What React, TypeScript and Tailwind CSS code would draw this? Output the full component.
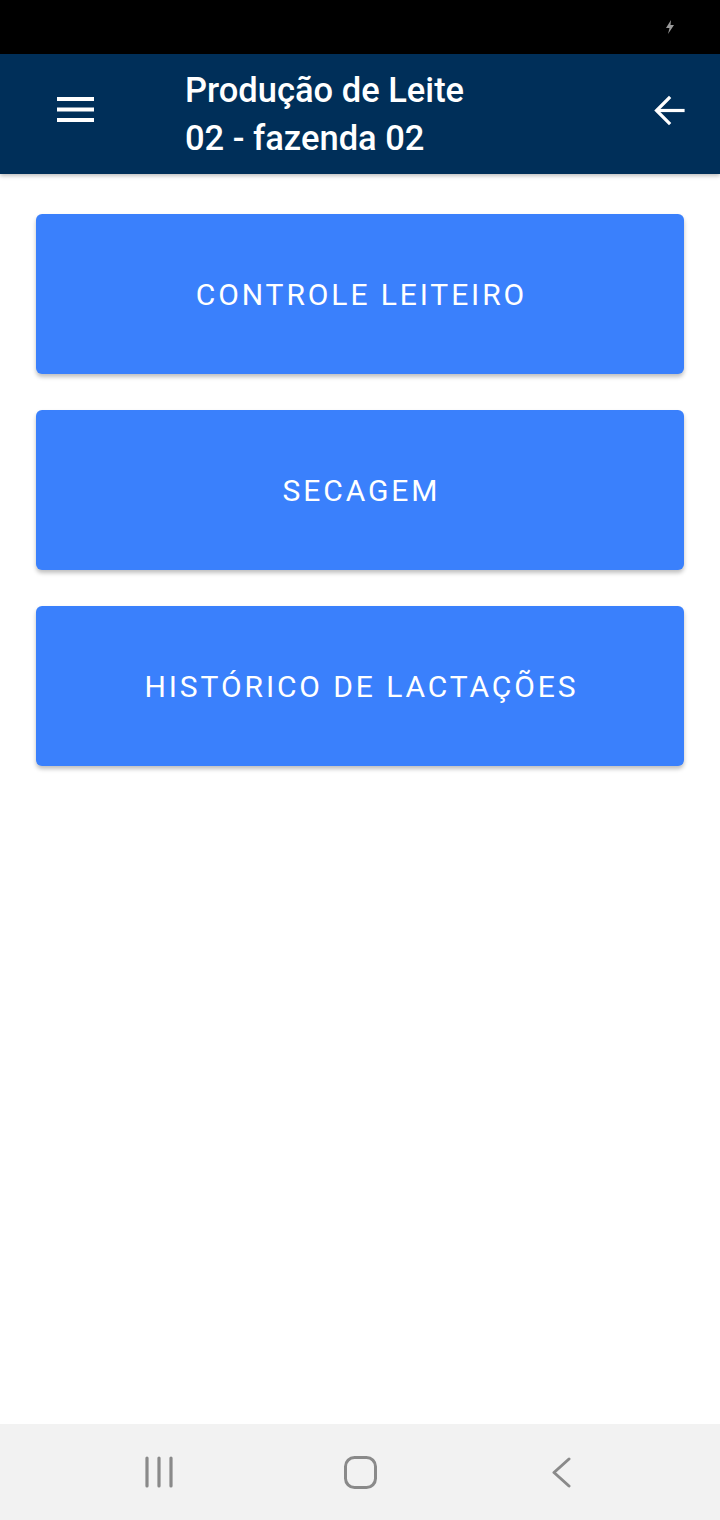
import React from "react";

const items = ["CONTROLE LEITEIRO", "SECAGEM", "HISTÓRICO DE LACTAÇÕES"];

const App = () => {
  return (
    <div className="flex flex-col w-[720px] h-[1520px] bg-white font-['Roboto',sans-serif] overflow-hidden">
      {/* status bar */}
      <div className="h-[54px] bg-black flex items-center justify-end pr-[45px] shrink-0">
        <svg width="10" height="14" viewBox="0 0 10 14">
          <path d="M6 0 L1 8 H4.5 L3 14 L9 5 H5.5 Z" fill="#9a9a9a" />
        </svg>
      </div>

      {/* header */}
      <header className="h-[120px] bg-[#002f59] flex items-center shrink-0 shadow-[0_2px_4px_rgba(0,0,0,0.25)] relative z-10">
        <div className="w-[185px] flex pl-[57px] -mt-[9px]">
          <svg width="37" height="25" viewBox="0 0 37 25">
            <rect x="0" y="0" width="37" height="4" fill="white" />
            <rect x="0" y="10.5" width="37" height="4" fill="white" />
            <rect x="0" y="21" width="37" height="4" fill="white" />
          </svg>
        </div>
        <div className="flex-1 flex flex-col text-white text-[34.5px] font-medium leading-[48px] -mt-[1px]">
          <span>Produção de Leite</span>
          <span>02 - fazenda 02</span>
        </div>
        <div className="pr-[35px] -mt-[8px]">
          <svg width="31" height="31" viewBox="0 0 31 31" fill="none" stroke="white" strokeWidth="3.2" strokeLinecap="square">
            <path d="M29 15.5H4" />
            <path d="M15 3L2.5 15.5L15 28" />
          </svg>
        </div>
      </header>

      {/* content */}
      <main className="flex-1 flex flex-col gap-[36px] px-[36px] pt-[40px]">
        {items.map((label) => (
          <button
            key={label}
            className="h-[160px] w-full rounded-[6px] bg-[#3a80fc] text-white text-[30px] tracking-[2.9px] pl-[2.9px] shadow-[0_3px_4px_rgba(0,0,0,0.25)]"
          >
            {label}
          </button>
        ))}
      </main>

      {/* nav bar */}
      <nav className="h-[96px] bg-[#f2f2f2] flex items-center shrink-0 pl-[145px]">
        <svg width="28" height="32" viewBox="0 0 28 32" stroke="#8a8a8a" strokeWidth="3.2" strokeLinecap="round">
          <path d="M2 2V30M14 2V30M26 2V30" />
        </svg>
        <svg className="ml-[171px]" width="33" height="33" viewBox="0 0 33 33" fill="none" stroke="#8a8a8a" strokeWidth="3">
          <rect x="1.5" y="1.5" width="30" height="30" rx="9" />
        </svg>
        <svg className="ml-[175px]" width="19" height="31" viewBox="0 0 19 31" fill="none" stroke="#8a8a8a" strokeWidth="3" strokeLinecap="round" strokeLinejoin="round">
          <path d="M17 2L2 15.5L17 29" />
        </svg>
      </nav>
    </div>
  );
};

export default App;
